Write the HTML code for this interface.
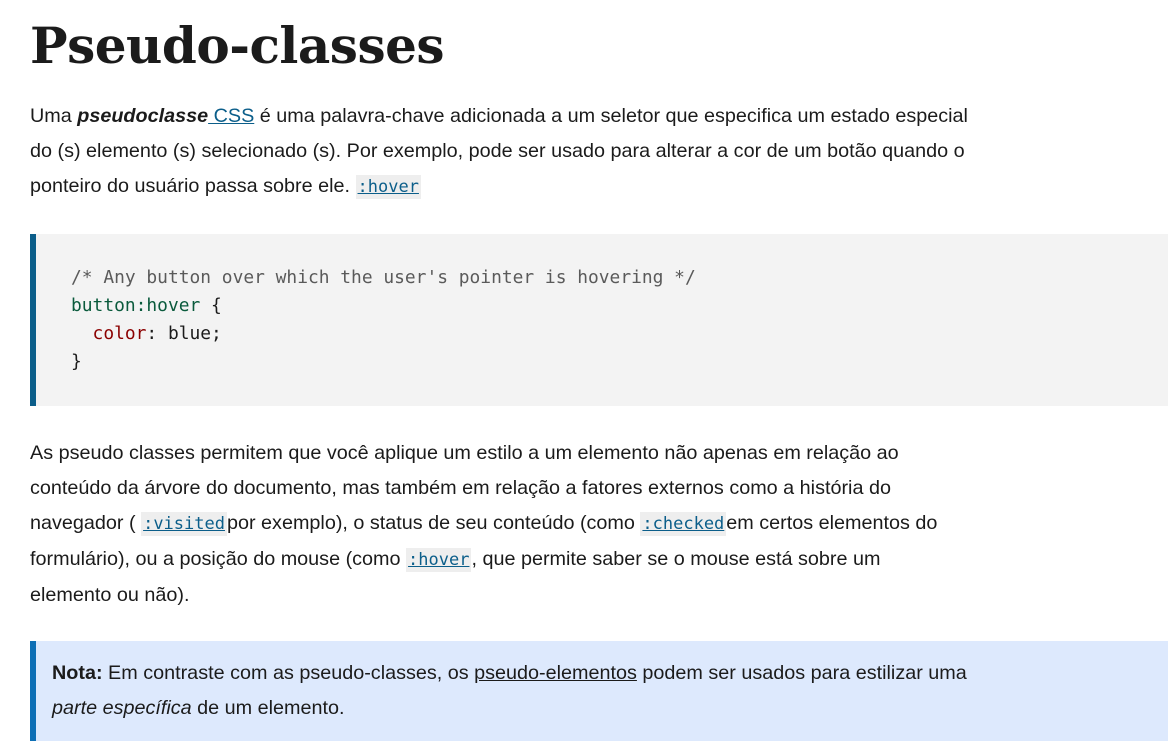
<!DOCTYPE html>
<html><head><meta charset="utf-8"><style>
body{margin:0;background:#fff;width:1168px;height:756px;overflow:hidden;font-family:"Liberation Sans",Arial,sans-serif;color:#1b1b1b}
h1{position:absolute;left:30px;top:6px;margin:0;font-family:"DejaVu Serif","Liberation Serif",serif;font-weight:bold;font-size:50px;letter-spacing:-0.5px;line-height:80px;color:#1b1b1b}
p{position:absolute;left:30px;margin:0;font-size:19.8px;line-height:35px;width:1100px;white-space:nowrap}
a{color:#0b5e8a;text-decoration:underline}
code{font-family:"DejaVu Sans Mono","Liberation Mono",monospace;font-size:17px;background:#eee;padding:2px 2px}
code a{color:#0b5e8a}
.pre{position:absolute;left:30px;top:234px;width:1138px;height:172px;background:#f3f3f3;border-left:6px solid #0b5e8a;font-family:"DejaVu Sans Mono","Liberation Mono",monospace;font-size:17.9px;line-height:28px;padding:30px 0 0 35px;box-sizing:border-box;white-space:pre;color:#1b1b1b}
.c{color:#5a5a5a}.s{color:#0a5a3c}.p{color:#8b0000}
.note{position:absolute;left:30px;top:641px;width:1138px;height:100px;background:#dde9fd;border-left:6px solid #0d6fb5;box-sizing:border-box;padding:15px 0 0 16px;font-size:19.8px;line-height:35px;white-space:nowrap}
.note a{color:#1b1b1b}
</style></head><body>
<h1>Pseudo-classes</h1>
<p style="top:99px">Uma <b><i>pseudoclasse</i></b><a href="#"> CSS</a> é uma palavra-chave adicionada a um seletor que especifica um estado especial<br>do (s) elemento (s) selecionado (s). Por exemplo, pode ser usado para alterar a cor de um botão quando o<br>ponteiro do usuário passa sobre ele. <code><a href="#">:hover</a></code></p>
<div class="pre"><span class="c">/* Any button over which the user's pointer is hovering */</span>
<span class="s">button:hover</span> {
  <span class="p">color</span>: blue;
}</div>
<p style="top:436px">As pseudo classes permitem que você aplique um estilo a um elemento não apenas em relação ao<br>conteúdo da árvore do documento, mas também em relação a fatores externos como a história do<br>navegador ( <code><a href="#">:visited</a></code>por exemplo), o status de seu conteúdo (como <code><a href="#">:checked</a></code>em certos elementos do<br>formulário), ou a posição do mouse (como <code><a href="#">:hover</a></code>, que permite saber se o mouse está sobre um<br>elemento ou não).</p>
<div class="note"><b>Nota:</b> Em contraste com as pseudo-classes, os <a href="#">pseudo-elementos</a> podem ser usados para estilizar uma<br><i>parte específica</i> de um elemento.</div>
</body></html>
